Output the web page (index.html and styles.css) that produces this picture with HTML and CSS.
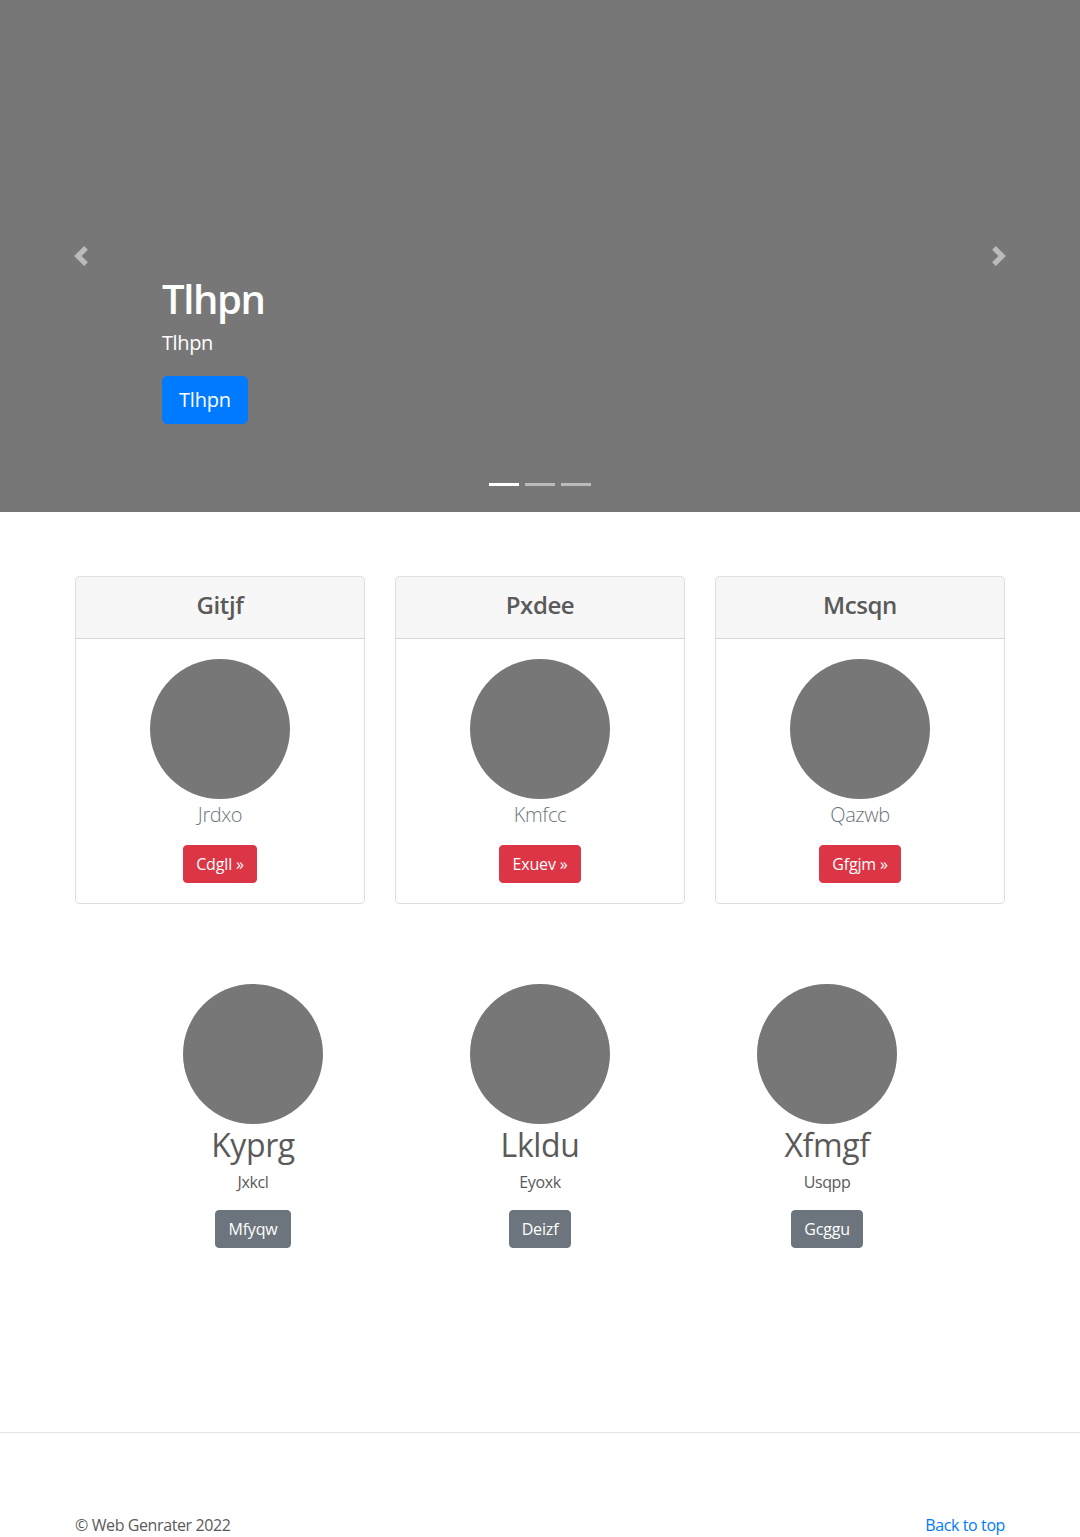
FILE: index.html
```html
<!DOCTYPE html>
<html lang="en">
<head>
<meta charset="utf-8">
<title>Web Genrater</title>
<link rel="stylesheet" href="styles.css">
</head>
<body>
<div class="carousel">
  <div class="carousel-item">
    <div class="carousel-caption">
      <h1 class="caption-title">Tlhpn</h1>
      <p class="caption-text">Tlhpn</p>
      <p class="caption-action"><a class="btn btn-lg btn-primary" href="#">Tlhpn</a></p>
    </div>
  </div>
  <a class="carousel-control control-prev" href="#">
    <svg class="control-icon" viewBox="0 0 8 8" width="20" height="20"><path fill="#fff" d="M5.25 0l-4 4 4 4 1.5-1.5L4.25 4l2.5-2.5L5.25 0z"/></svg>
  </a>
  <a class="carousel-control control-next" href="#">
    <svg class="control-icon" viewBox="0 0 8 8" width="20" height="20"><path fill="#fff" d="M2.75 0l-1.5 1.5L3.75 4l-2.5 2.5L2.75 8l4-4-4-4z"/></svg>
  </a>
  <ol class="carousel-indicators">
    <li class="indicator active"></li>
    <li class="indicator"></li>
    <li class="indicator"></li>
  </ol>
</div>

<div class="container">
  <div class="card-deck">
    <div class="card">
      <div class="card-header"><h4 class="card-title">Gitjf</h4></div>
      <div class="card-body">
        <svg class="avatar" width="140" height="140"><circle cx="70" cy="70" r="70" fill="#777"/></svg>
        <p class="card-lead">Jrdxo</p>
        <a class="btn btn-danger" href="#">Cdgll &raquo;</a>
      </div>
    </div>
    <div class="card">
      <div class="card-header"><h4 class="card-title">Pxdee</h4></div>
      <div class="card-body">
        <svg class="avatar" width="140" height="140"><circle cx="70" cy="70" r="70" fill="#777"/></svg>
        <p class="card-lead">Kmfcc</p>
        <a class="btn btn-danger" href="#">Exuev &raquo;</a>
      </div>
    </div>
    <div class="card">
      <div class="card-header"><h4 class="card-title">Mcsqn</h4></div>
      <div class="card-body">
        <svg class="avatar" width="140" height="140"><circle cx="70" cy="70" r="70" fill="#777"/></svg>
        <p class="card-lead">Qazwb</p>
        <a class="btn btn-danger" href="#">Gfgjm &raquo;</a>
      </div>
    </div>
  </div>

  <div class="marketing">
    <div class="feature">
      <svg class="avatar" width="140" height="140"><circle cx="70" cy="70" r="70" fill="#777"/></svg>
      <h2 class="feature-title">Kyprg</h2>
      <p class="feature-text">Jxkcl</p>
      <a class="btn btn-secondary" href="#">Mfyqw</a>
    </div>
    <div class="feature">
      <svg class="avatar" width="140" height="140"><circle cx="70" cy="70" r="70" fill="#777"/></svg>
      <h2 class="feature-title">Lkldu</h2>
      <p class="feature-text">Eyoxk</p>
      <a class="btn btn-secondary" href="#">Deizf</a>
    </div>
    <div class="feature">
      <svg class="avatar" width="140" height="140"><circle cx="70" cy="70" r="70" fill="#777"/></svg>
      <h2 class="feature-title">Xfmgf</h2>
      <p class="feature-text">Usqpp</p>
      <a class="btn btn-secondary" href="#">Gcggu</a>
    </div>
  </div>
</div>

<footer class="footer">
  <div class="container footer-inner">
    <p class="footer-copy">&copy; Web Genrater 2022</p>
    <a class="footer-link" href="#">Back to top</a>
  </div>
</footer>
</body>
</html>
```

FILE: styles.css
```css
* { box-sizing: border-box; }
html, body { margin: 0; padding: 0; }
body {
  font-family: "Open Sans", "Noto Sans", "Liberation Sans", sans-serif;
  font-size: 16px;
  line-height: 1.5;
  letter-spacing: -0.025em;
  color: #5a5a5a;
  background: #fff;
}
a { text-decoration: none; }

.carousel {
  position: relative;
  height: 512px;
  background: #777;
  margin-bottom: 64px;
}
.carousel-item { height: 512px; position: relative; }
.carousel-caption {
  position: absolute;
  left: 162px;
  right: 162px;
  bottom: 52px;
  padding: 20px 0;
  color: #fff;
  text-align: left;
}
.caption-title {
  margin: 0 0 5px;
  font-size: 40px;
  font-weight: 600;
  line-height: 1.2;
  letter-spacing: -0.035em;
}
.caption-text { margin: 0 0 18px; font-size: 20px; line-height: 1.5; }
.caption-action { margin: 0 0 16px; }

.btn {
  display: inline-block;
  color: #fff;
  border: 1px solid transparent;
  padding: 6px 12px;
  font-size: 16px;
  line-height: 1.5;
  letter-spacing: -0.01em;
  border-radius: 4px;
}
.btn-lg { padding: 8px 16px; font-size: 20px; border-radius: 5px; }
.btn-primary { background: #007bff; border-color: #007bff; }
.btn-danger { background: #dc3545; border-color: #dc3545; }
.btn-secondary { background: #6c757d; border-color: #6c757d; }

.carousel-control {
  position: absolute;
  top: 0;
  bottom: 0;
  width: 162px;
  display: flex;
  align-items: center;
  justify-content: center;
  opacity: .5;
}
.control-prev { left: 0; }
.control-next { right: 0; }
.control-icon { display: block; }

.carousel-indicators {
  position: absolute;
  left: 162px;
  right: 162px;
  bottom: 0;
  margin: 0 0 16px;
  padding: 0;
  list-style: none;
  display: flex;
  justify-content: center;
}
.indicator {
  width: 30px;
  height: 3px;
  margin: 0 3px;
  box-sizing: content-box;
  background: #fff;
  background-clip: padding-box;
  border-top: 10px solid transparent;
  border-bottom: 10px solid transparent;
  opacity: .5;
}
.indicator.active { opacity: 1; }

.container { width: 930px; margin: 0 auto; }

.card-deck {
  display: grid;
  grid-template-columns: repeat(3, 290px);
  column-gap: 30px;
}
.card {
  border: 1px solid rgba(0,0,0,.125);
  border-radius: 4px;
  text-align: center;
  overflow: hidden;
}
.card-header {
  background: rgba(0,0,0,.03);
  border-bottom: 1px solid rgba(0,0,0,.125);
  padding: 14px 20px 10px;
}
.card-title {
  margin: 0 0 8px;
  font-size: 24px;
  line-height: 1.2;
  font-weight: 600;
  color: #5a5a5a;
}
.card-body { padding: 20px; }
.avatar { display: block; margin: 0 auto; }
.card-lead {
  margin: 0 0 16px;
  padding-top: 2px;
  line-height: 28px;
  font-size: 20px;
  font-weight: 300;
  color: #6c757d;
}

.marketing {
  width: 861px;
  margin: 80px auto 0;
  display: grid;
  grid-template-columns: repeat(3, 1fr);
  text-align: center;
}
.feature-title {
  margin: 2px 0 6px;
  font-size: 32px;
  line-height: 1.2;
  font-weight: 400;
}
.feature-text { margin: 0 0 16px; }

.footer {
  margin-top: 184px;
  border-top: 1px solid #e5e5e5;
  padding-top: 80px;
}
.footer-inner {
  display: flex;
  justify-content: space-between;
  align-items: baseline;
}
.footer-copy { margin: 0 0 16px; }
.footer-link { color: #007bff; }
```
